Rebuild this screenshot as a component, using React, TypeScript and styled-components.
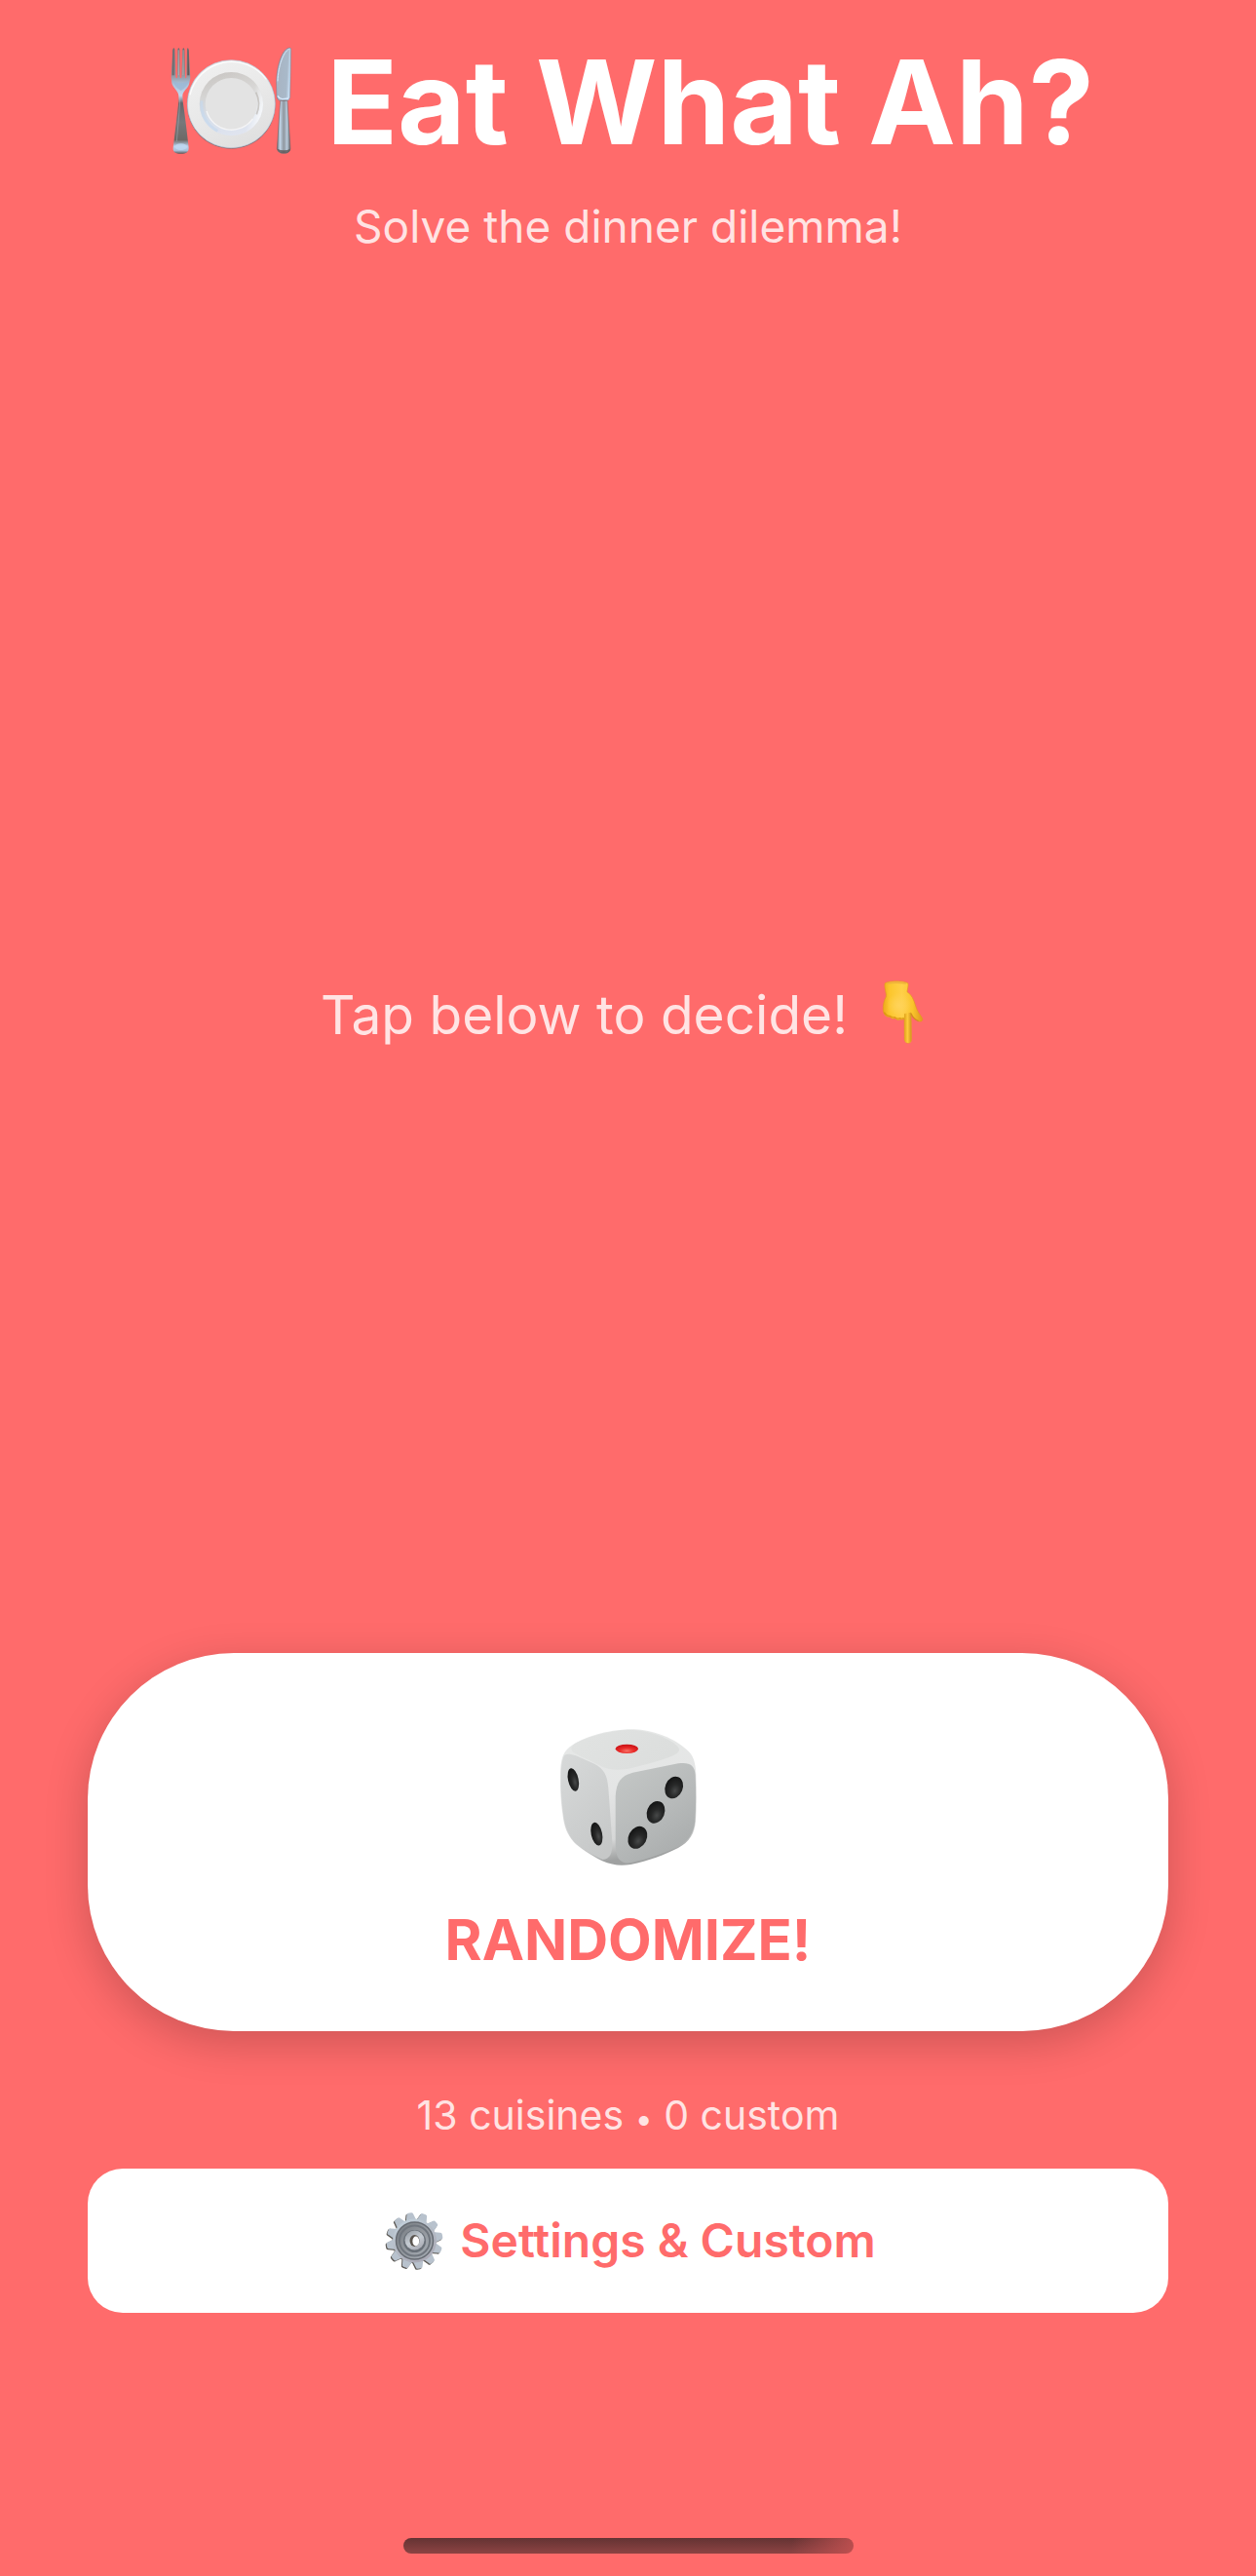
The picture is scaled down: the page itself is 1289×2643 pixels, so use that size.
import React, { useState } from "react";
import styled, { createGlobalStyle } from "styled-components";

const coral = "#ff6b6b";

const GlobalStyle = createGlobalStyle`
  *, *::before, *::after { box-sizing: border-box; }
  body {
    margin: 0;
    background: ${coral};
    font-family: Inter, "Liberation Sans", sans-serif;
  }
`;

const Screen = styled.main`
  display: flex;
  flex-direction: column;
  min-height: 100vh;
  padding: 33px 90px 23px;
  background: ${coral};
  color: #fff;
`;

const Header = styled.header`
  display: flex;
  flex-direction: column;
  align-items: center;
  gap: 27px;
  padding-bottom: 126px;
`;

const Title = styled.h1`
  display: flex;
  align-items: center;
  gap: 35px;
  margin: 0;
  font-size: 120px;
  line-height: 144px;
  font-weight: 700;
  white-space: nowrap;
`;

const Subtitle = styled.p`
  margin: 0;
  font-size: 46px;
  line-height: 56px;
  color: rgba(255, 255, 255, 0.82);
`;

const Stage = styled.section`
  display: flex;
  flex: 1;
  align-items: center;
  justify-content: center;
`;

const Prompt = styled.p`
  display: flex;
  align-items: center;
  gap: 24px;
  margin: 0;
  font-size: 55px;
  line-height: 70px;
  color: rgba(255, 255, 255, 0.82);
`;

const Actions = styled.section`
  display: flex;
  flex-direction: column;
`;

const ActionButton = styled.button`
  display: flex;
  align-items: center;
  justify-content: center;
  width: 100%;
  border: 0;
  background: #fff;
  color: ${coral};
  font-family: inherit;
  cursor: pointer;
`;

const RandomizeButton = styled(ActionButton)`
  flex-direction: column;
  gap: 40px;
  padding: 78px 0 58px;
  border-radius: 150px;
  box-shadow: 0 12px 45px rgba(0, 0, 0, 0.2);
  font-size: 58px;
  line-height: 72px;
  font-weight: 700;
`;

const SettingsButton = styled(ActionButton)`
  gap: 14px;
  padding: 40px 0;
  border-radius: 36px;
  font-size: 48px;
  line-height: 68px;
  font-weight: 600;
`;

const Count = styled.p`
  margin: 61px 0 30px;
  text-align: center;
  font-size: 41px;
  line-height: 50px;
  color: rgba(255, 255, 255, 0.82);
`;

const Bullet = styled.span`
  font-size: 32px;
  line-height: 1;
`;

const HomeIndicator = styled.div`
  align-self: center;
  width: 462px;
  max-width: 100%;
  height: 16px;
  margin-top: 231px;
  border-radius: 8px;
  background:
    linear-gradient(100deg, rgba(192, 80, 80, 0) 86%, rgba(192, 80, 80, 0.95) 100%),
    linear-gradient(180deg, #643333, #8c4343);
`;

const Emoji = styled.svg`
  display: block;
  flex: none;
`;

function PlateEmoji() {
  return (
    <Emoji width="134" height="114" viewBox="48 84 402 342" aria-hidden="true">
      <defs>
        <linearGradient id="fork" x1="0" y1="0" x2="0" y2="1">
          <stop offset="0" stopColor="#6b6b6e" />
          <stop offset="0.24" stopColor="#8c8d91" />
          <stop offset="0.34" stopColor="#a9c0d8" />
          <stop offset="0.45" stopColor="#c3d9ee" />
          <stop offset="0.52" stopColor="#66686c" />
          <stop offset="0.7" stopColor="#77787b" />
          <stop offset="0.87" stopColor="#6c6966" />
          <stop offset="0.93" stopColor="#b9d2ec" />
          <stop offset="0.97" stopColor="#a9bfd6" />
          <stop offset="1" stopColor="#5d5757" />
        </linearGradient>
        <linearGradient id="tine" x1="0" y1="0" x2="1" y2="0">
          <stop offset="0" stopColor="#626266" />
          <stop offset="0.5" stopColor="#c3c4c8" />
          <stop offset="1" stopColor="#55504f" />
        </linearGradient>
        <linearGradient id="blade" x1="0" y1="0" x2="1" y2="0.2">
          <stop offset="0" stopColor="#b9d3ee" />
          <stop offset="0.25" stopColor="#a8b5c4" />
          <stop offset="0.8" stopColor="#a9b9c9" />
          <stop offset="1" stopColor="#c8def3" />
        </linearGradient>
        <linearGradient id="handle" x1="0" y1="0" x2="1" y2="0">
          <stop offset="0" stopColor="#6e7276" />
          <stop offset="0.22" stopColor="#c1d5e8" />
          <stop offset="0.5" stopColor="#8f979f" />
          <stop offset="0.75" stopColor="#b7c8d8" />
          <stop offset="1" stopColor="#66686c" />
        </linearGradient>
        <linearGradient id="rim" x1="0.2" y1="0" x2="0.7" y2="1">
          <stop offset="0" stopColor="#f0f0f0" />
          <stop offset="0.5" stopColor="#e9e9e9" />
          <stop offset="1" stopColor="#dfdfdf" />
        </linearGradient>
        <linearGradient id="well" x1="0.3" y1="0" x2="0.45" y2="1">
          <stop offset="0" stopColor="#c9c6c3" />
          <stop offset="0.35" stopColor="#d5d4d3" />
          <stop offset="0.7" stopColor="#d6deea" />
          <stop offset="1" stopColor="#dde2ee" />
        </linearGradient>
        <linearGradient id="wellGlow" x1="0.1" y1="0.3" x2="1" y2="0.5">
          <stop offset="0" stopColor="#fff" stopOpacity="0" />
          <stop offset="0.8" stopColor="#fff" stopOpacity="0.1" />
          <stop offset="1" stopColor="#fff" stopOpacity="0.75" />
        </linearGradient>
      </defs>
      <path
        d="M82 92Q85 84 88 92L91 178Q94 184 96 178L97 92Q100 84 103 92L104 178Q107 184 109 178L112 92Q115 84 118 92L120 178Q122 184 124 178L126 92Q128 84 131 92L136 180L133 196C130 213 113 219 112 234L113 252C120 300 126 350 131 395C131 408 123 413 107 413C91 413 82 408 83 395C88 350 95 300 100 252L100 234C98 218 82 211 79 196L77 178Z"
        fill="url(#fork)"
      />
      <path d="M82 94h4l2 78h-8zM98 94h3l1 78h-4zM113 94h3l1 78h-5zM127 94h3l3 78h-7z" fill="url(#tine)" />
      <path d="M83 188Q106 204 131 188Q128 206 107 219Q87 207 83 188Z" fill="#9ab7d4" opacity="0.75" />
      <path d="M105 222L103 270L94 375" fill="none" stroke="#c3d4e4" strokeWidth="2" opacity="0.5" />
      <ellipse cx="107" cy="392" rx="19" ry="10" fill="#bfd8f1" opacity="0.8" />
      <circle cx="262" cy="262" r="136" fill="#8a6e75" />
      <circle cx="262" cy="260" r="135" fill="url(#rim)" stroke="#bccbdd" strokeWidth="2" />
      <path d="M135 232A132 132 0 0 1 370 184" fill="none" stroke="#fff" strokeWidth="4" opacity="0.8" />
      <circle cx="262" cy="260" r="98" fill="url(#well)" />
      <circle cx="262" cy="260" r="98" fill="url(#wellGlow)" />
      <path d="M171 250A92 92 0 0 0 220 343" fill="none" stroke="#c5d8ee" strokeWidth="9" opacity="0.65" />
      <circle cx="262" cy="260" r="80" fill="#e3e3e3" />
      <path d="M338 224A83 83 0 0 1 340 292" fill="none" stroke="#b9b4ae" strokeWidth="5" opacity="0.65" />
      <path d="M186 282A80 80 0 0 0 328 306" fill="none" stroke="#f4f4f5" strokeWidth="4" />
      <path
        d="M446 92L443 239Q442 248 433 250L411 250Q404 247 402 238L401 190C402 140 420 88 442 87Q446 87 446 92Z"
        fill="url(#blade)"
        stroke="#697788"
        strokeWidth="1.5"
      />
      <path d="M405 190C407 142 422 100 440 91" fill="none" stroke="#d1e4f6" strokeWidth="3" />
      <path d="M405 235Q410 244 419 245L438 243" fill="none" stroke="#d7eafe" strokeWidth="4" />
      <path
        d="M413 250L435 250L444 398Q442 412 424 412Q406 412 403 398Z"
        fill="url(#handle)"
        stroke="#665f63"
        strokeWidth="1.5"
      />
      <path d="M404 398Q424 408 444 398Q442 412 424 412Q406 412 404 398Z" fill="#5c5555" opacity="0.8" />
    </Emoji>
  );
}

function PointDownEmoji() {
  return (
    <Emoji width="66" height="70" viewBox="42 48 198 210" aria-hidden="true">
      <defs>
        <linearGradient id="skin" x1="0" y1="0" x2="1" y2="0">
          <stop offset="0" stopColor="#eda91c" />
          <stop offset="0.16" stopColor="#fcc62c" />
          <stop offset="0.48" stopColor="#ffcf48" />
          <stop offset="0.75" stopColor="#fac42c" />
          <stop offset="1" stopColor="#dd9a1c" />
        </linearGradient>
        <linearGradient id="finger" x1="0" y1="0" x2="1" y2="0">
          <stop offset="0" stopColor="#dda01a" />
          <stop offset="0.45" stopColor="#ffcb3b" />
          <stop offset="1" stopColor="#d2951e" />
        </linearGradient>
        <radialGradient id="knuckle">
          <stop offset="0" stopColor="#ffd35a" />
          <stop offset="1" stopColor="#ffd35a" stopOpacity="0" />
        </radialGradient>
      </defs>
      <path
        d="M84 57C94 48 146 48 156 57C157 66 154 74 153 83C167 92 173 106 179 126C184 143 191 150 199 163C203 171 197 176 188 173C177 168 169 160 165 149L166 230C166 244 147 244 145 230L144 165C140 169 136 170 132 167C127 171 120 169 115 164C109 167 103 165 100 160C88 162 80 152 79 139C78 121 82 109 88 98C90 86 82 76 84 57Z"
        fill="url(#skin)"
        stroke="#e2991f"
        strokeWidth="2"
      />
      <path d="M144 150L165 146L166 230C166 243 147 243 145 230Z" fill="url(#finger)" />
      <ellipse cx="128" cy="124" rx="38" ry="38" fill="url(#knuckle)" />
      <path d="M91 57Q120 52 150 57" fill="none" stroke="#efb23c" strokeWidth="5" />
      <path
        d="M82 146Q90 158 99 157Q106 163 115 161Q123 168 131 164Q137 167 143 163"
        fill="none"
        stroke="#d8910f"
        strokeWidth="4"
        opacity="0.8"
      />
      <path d="M165 149C169 160 177 168 188 173" fill="none" stroke="#cf8c1b" strokeWidth="4" opacity="0.8" />
    </Emoji>
  );
}

function DieEmoji() {
  return (
    <Emoji width="140" height="140" viewBox="103 102 420 420" aria-hidden="true">
      <defs>
        <linearGradient id="dieBody" x1="0" y1="0" x2="0.15" y2="1">
          <stop offset="0" stopColor="#e6e8e7" />
          <stop offset="0.5" stopColor="#e4e5e5" />
          <stop offset="0.85" stopColor="#d6d7d7" />
          <stop offset="1" stopColor="#9fa1a1" />
        </linearGradient>
        <linearGradient id="dieTop" x1="0" y1="0" x2="1" y2="0.3">
          <stop offset="0" stopColor="#e1e3e2" />
          <stop offset="1" stopColor="#dcdedd" />
        </linearGradient>
        <linearGradient id="dieLeft" x1="0.2" y1="0" x2="0.7" y2="1">
          <stop offset="0" stopColor="#d6d8d8" />
          <stop offset="1" stopColor="#c6c8c8" />
        </linearGradient>
        <linearGradient id="dieRight" x1="0.1" y1="0" x2="0.7" y2="1">
          <stop offset="0" stopColor="#c4c7c6" />
          <stop offset="0.55" stopColor="#b7baba" />
          <stop offset="1" stopColor="#a9acac" />
        </linearGradient>
        <radialGradient id="pip" cx="0.62" cy="0.62" r="0.62">
          <stop offset="0" stopColor="#474949" />
          <stop offset="0.45" stopColor="#282929" />
          <stop offset="1" stopColor="#151616" />
        </radialGradient>
        <radialGradient id="redPip" cx="0.5" cy="0.72" r="0.6">
          <stop offset="0" stopColor="#f67367" />
          <stop offset="0.5" stopColor="#ea2d2b" />
          <stop offset="1" stopColor="#cf1518" />
        </radialGradient>
      </defs>
      <path
        d="M330 103C365 104 400 113 432 127C460 140 480 155 495 168C513 184 519 205 521 240C523 290 523 340 520 385C517 425 500 450 466 468C425 489 375 508 320 519C288 524 262 521 232 508C196 489 162 468 144 449C124 427 115 402 111 370C105 330 102 290 103 250C103 210 107 185 121 168C134 153 152 143 177 132C218 115 275 102 330 103Z"
        fill="url(#dieBody)"
      />
      <path
        d="M326 105C366 107 415 121 450 143C474 160 476 172 452 183C420 197 369 211 323 222C281 231 249 228 220 212C193 197 163 186 142 173C132 162 138 151 155 143C204 121 268 103 326 105Z"
        fill="url(#dieTop)"
      />
      <path
        d="M113 188C117 177 130 177 151 184L208 209C238 224 248 245 251 284L263 450C264 487 256 501 234 504C197 487 163 467 146 449C126 426 117 400 113 370C107 330 104 290 105 250C105 224 107 203 113 188Z"
        fill="url(#dieLeft)"
      />
      <path
        d="M273 308C276 264 290 246 326 236L466 208C500 203 516 212 519 242C521 290 521 340 518 385C515 423 498 446 464 464C420 486 372 502 322 513C290 519 275 503 273 462Z"
        fill="url(#dieRight)"
      />
      <ellipse cx="308" cy="163" rx="35" ry="14" fill="url(#redPip)" />
      <ellipse cx="143" cy="258" rx="16" ry="36" fill="url(#pip)" transform="rotate(-12 143 258)" />
      <ellipse cx="215" cy="425" rx="17" ry="36" fill="url(#pip)" transform="rotate(-12 215 425)" />
      <ellipse cx="453" cy="282" rx="27" ry="35" fill="url(#pip)" transform="rotate(22 453 282)" />
      <ellipse cx="397" cy="358" rx="27" ry="35" fill="url(#pip)" transform="rotate(22 397 358)" />
      <ellipse cx="341" cy="436" rx="28" ry="36" fill="url(#pip)" transform="rotate(28 341 436)" />
    </Emoji>
  );
}

const toothAngles = Array.from({ length: 12 }, (_, i) => i * 30 - 10);

function Teeth() {
  return (
    <>
      {toothAngles.map((angle) => (
        <path
          key={angle}
          d="M30 14L32 7Q32 5 34 5H37Q39 5 39 7L41 14Z"
          transform={`rotate(${angle} 35.5 34)`}
        />
      ))}
    </>
  );
}

function GearEmoji() {
  return (
    <Emoji width="68" height="68" viewBox="0 0 68 68" aria-hidden="true">
      <defs>
        <linearGradient id="gearFace" x1="0.2" y1="0" x2="0.7" y2="1">
          <stop offset="0" stopColor="#c3d1dc" />
          <stop offset="0.5" stopColor="#b4bac4" />
          <stop offset="1" stopColor="#aaa9b5" />
        </linearGradient>
        <linearGradient id="gearDish" x1="0" y1="0" x2="1" y2="1">
          <stop offset="0" stopColor="#747a80" />
          <stop offset="0.5" stopColor="#93989e" />
          <stop offset="1" stopColor="#a8afb7" />
        </linearGradient>
        <linearGradient id="gearHub" x1="0.2" y1="0" x2="0.8" y2="1">
          <stop offset="0" stopColor="#99a0a7" />
          <stop offset="0.5" stopColor="#c6ccd3" />
          <stop offset="1" stopColor="#a5a7b0" />
        </linearGradient>
      </defs>
      <g fill="#5d5a56" transform="translate(-1 1)">
        <Teeth />
        <circle cx="35.5" cy="34" r="22" />
      </g>
      <g fill="#b8c2cd">
        <Teeth />
      </g>
      <circle cx="35.5" cy="34" r="22.5" fill="url(#gearFace)" />
      <circle cx="35.5" cy="34" r="19" fill="url(#gearDish)" stroke="#666b72" strokeWidth="1.5" />
      <circle cx="35.5" cy="34" r="15.5" fill="none" stroke="#70767e" strokeWidth="2" />
      <circle cx="35.5" cy="34.5" r="11.5" fill="#697078" />
      <circle cx="35.5" cy="33.5" r="10" fill="url(#gearHub)" />
      <ellipse cx="35.5" cy="34" rx="5" ry="6" fill="#5a554f" />
      <ellipse cx="36.8" cy="34.5" rx="3.4" ry="5" fill="#fff" />
    </Emoji>
  );
}

const cuisines = [
  "Chinese", "Malay", "Indian", "Japanese", "Korean", "Thai", "Vietnamese",
  "Western", "Italian", "Mexican", "Peranakan", "Indonesian", "Hawker",
];

export default function App() {
  const [custom] = useState<string[]>([]);

  return (
    <>
      <GlobalStyle />
      <Screen>
        <Header>
          <Title>
            <PlateEmoji />
            Eat What Ah?
          </Title>
          <Subtitle>Solve the dinner dilemma!</Subtitle>
        </Header>
        <Stage>
          <Prompt>
            Tap below to decide!
            <PointDownEmoji />
          </Prompt>
        </Stage>
        <Actions>
          <RandomizeButton type="button">
            <DieEmoji />
            RANDOMIZE!
          </RandomizeButton>
          <Count>
            {cuisines.length} cuisines <Bullet>•</Bullet> {custom.length} custom
          </Count>
          <SettingsButton type="button">
            <GearEmoji />
            Settings &amp; Custom
          </SettingsButton>
        </Actions>
        <HomeIndicator />
      </Screen>
    </>
  );
}
